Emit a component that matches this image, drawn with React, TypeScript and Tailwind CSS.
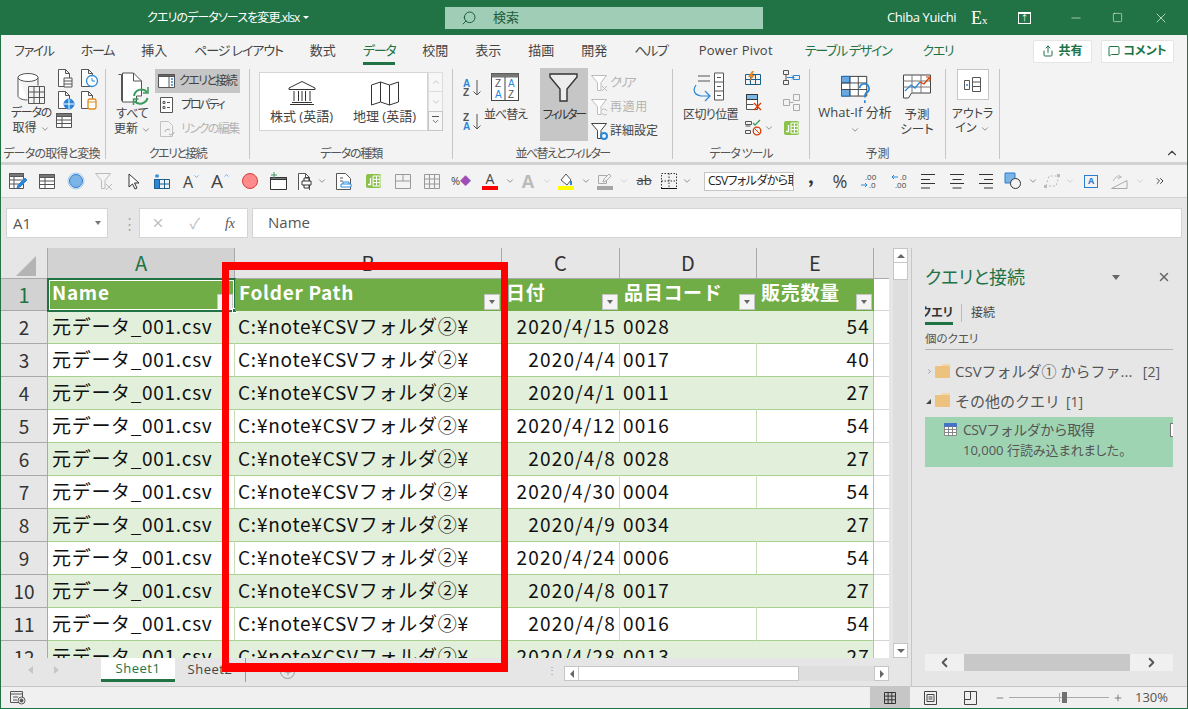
import type { ReactNode } from "react";
import { ChevronDown, Search, Share, MessageSquare, X, Minus, Square, ChevronUp, ChevronLeft, ChevronRight, ChevronsRight, Plus } from "lucide-react";

const ink = "#555";
const blue = "#2b88d8";

const Svg = ({ w = 20, h = 20, children }: { w?: number; h?: number; children: ReactNode }) => (
  <svg width={w} height={h} viewBox={`0 0 ${w} ${h}`} fill="none" stroke={ink} strokeWidth="1" className="shrink-0">
    {children}
  </svg>
);

const Chev = ({ c = "#555" }: { c?: string }) => <ChevronDown size={10} color={c} strokeWidth={1.5} className="inline-block shrink-0" />;

const Doc = ({ c = ink }: { c?: string }) => <path d="M2.5 1.5h7l4 4v13h-11zM9.5 1.5v4h4" stroke={c} fill="#fff" />;

/* ribbon icons */
const DatabaseIcon = () => (
  <Svg w={28} h={31}>
    <path d="M1 4.5V23c0 2 4 4 9.5 4M21 4.5V12.5" fill="#fff" />
    <ellipse cx="11" cy="4.5" rx="10" ry="4" fill="#fff" />
    <path d="M11.5 13.5h16v17h-16zM11.5 19h16M11.5 24.5h16M17 13.5v17M22.5 13.5v17" />
  </Svg>
);
const DocLines = () => <Svg><Doc /><path d="M8 10h8v9H8zM8 13h8M8 16h8" fill="#fff" /></Svg>;
const DocClock = () => <Svg><Doc /><circle cx="13" cy="13" r="5.5" stroke={blue} fill="#fff" strokeWidth="1.3" /><path d="M13 10v3h3" stroke={blue} /></Svg>;
const DocGlobe = () => <Svg><Doc /><circle cx="13" cy="14" r="5" fill={blue} stroke={blue} /><path d="M8 14h10M13 9v10" stroke="#fff" /></Svg>;
const DocDb = () => <Svg><Doc /><rect x="9" y="9" width="8" height="10" rx="2" stroke="#e38a1e" fill="#fff" strokeWidth="1.3" /><path d="M9 12h8" stroke="#e38a1e" /></Svg>;
const TableHead = ({ w = 16 }: { w?: number }) => (
  <Svg w={w} h={16}>
    <path d="M.5 1.5h15v14H.5z" fill="#fff" />
    <path d="M.5 1.5h15v3H.5z" fill="#777" />
    <path d="M.5 8h15M.5 11.5h15M6 5v10" />
  </Svg>
);
const RefreshAll = () => (
  <Svg w={32} h={36}>
    <path d="M1.5 2.5h3v26h6" />
    <path d="M5.5 1h11l8 8v15h-5v6h-14z" fill="#fff" />
    <path d="M16.5 1v8h8" />
    <path d="M17 24a7.5 7.5 0 0 1 13-4M30.5 26a7.5 7.5 0 0 1-13 3" stroke="#3a9b5c" strokeWidth="2" />
    <path d="M31 15v6h-5M16.5 33v-6h5" stroke="#3a9b5c" strokeWidth="1.5" />
  </Svg>
);
const QueriesIcon = () => (
  <Svg w={18} h={16}>
    <path d="M.5 1.5h16v13H.5z" fill="#fff" />
    <path d="M.5 1.5h16v2H.5z" fill="#666" />
    <path d="M11 3.5v11" />
    <path d="M13 6h2M13 9h2M13 12h2" stroke={blue} strokeWidth="1.5" />
  </Svg>
);
const PropsIcon = () => (
  <Svg w={14} h={18}>
    <path d="M.5 1.5h12v15H.5z" fill="#fff" />
    <path d="M3 5.5h2v2H3zM3 10.5h2v2H3zM7 6.5h3M7 11.5h3" />
  </Svg>
);
const LinksIcon = () => (
  <Svg w={16} h={18}>
    <path d="M.5 1.5h8l4 4v11H.5z" stroke="#c2c2c2" />
    <path d="M5 12a3 3 0 0 1 5-2M14 12a3 3 0 0 1-5 2" stroke="#aaa" />
  </Svg>
);
const BankIcon = () => (
  <Svg w={28} h={24}>
    <path d="M14 .5 1 7v1.5h26V7zM2 23.5h24M4 21.5h20" stroke="#333" />
    <path d="M6 10v10M10.5 10v10M14 10v10M17.5 10v10M22 10v10" stroke="#333" />
  </Svg>
);
const FoldMap = () => (
  <Svg w={28} h={25}>
    <path d="M.5 4 9.5 1l9 3 9-3v20l-9 3-9-3-9 3zM9.5 1v20M18.5 4v20" stroke="#333" />
  </Svg>
);
const AZ = ({ rev }: { rev?: boolean }) => (
  <svg width="19" height="20" viewBox="0 0 19 20" className="shrink-0">
    <text x="0" y="9" fontSize="10" fontWeight="700" fontFamily="Liberation Sans" fill={rev ? "#555" : blue}>{rev ? "Z" : "A"}</text>
    <text x="0" y="18" fontSize="10" fontWeight="700" fontFamily="Liberation Sans" fill={rev ? blue : "#555"}>{rev ? "A" : "Z"}</text>
    <path d="M14 2v15M10.5 13.5 14 17l3.5-3.5" stroke={ink} fill="none" />
  </svg>
);
const SortBig = () => (
  <svg width="29" height="29" viewBox="0 0 29 29" className="shrink-0">
    <rect x=".5" y=".5" width="27" height="27" fill="#fff" stroke="#444" />
    <rect x=".5" y=".5" width="27" height="4" fill="#777" />
    <path d="M14 4v24" stroke="#444" />
    <text x="4" y="14" fontSize="10" fontFamily="Liberation Sans" fill="#555">Z</text>
    <text x="4" y="25" fontSize="10" fontFamily="Liberation Sans" fill={blue}>A</text>
    <text x="17" y="14" fontSize="10" fontFamily="Liberation Sans" fill={blue}>A</text>
    <text x="17" y="25" fontSize="10" fontFamily="Liberation Sans" fill="#555">Z</text>
  </svg>
);
const Funnel = () => (
  <Svg w={30} h={29}>
    <path d="M1 1h27v3L18 16v12h-7V16L1 4z" fill="#ededed" stroke="#333" strokeWidth="1.4" />
  </Svg>
);
const FunnelSmall = ({ children, c = "#bbb" }: { children?: ReactNode; c?: string }) => (
  <Svg w={19} h={19}>
    <path d="M.5 1.5h15L10 8.5v8H6.5v-8z" fill="#fff" stroke={c} />
    {children}
  </Svg>
);
const TextCols = () => (
  <Svg w={36} h={30}>
    <path d="M5 4h12M5 9h12" />
    <path d="M21.5 1h9v27h-9zM21.5 10h9M21.5 19h9M24 5.5h4M24 14.5h4M24 23.5h4" fill="#fff" />
    <path d="M3 13c-4 6-1 10 5 11h8M12 19l5 5-5 5" stroke={blue} strokeWidth="1.2" />
  </Svg>
);
const FlashFill = () => (
  <Svg w={17} h={15}>
    <path d="M.5 3.5h15v10H.5zM.5 8.5h15M5.5 3.5v10M10.5 3.5v10" stroke="#1b5e8c" />
    <path d="M7 0 3 6h3l-2 5 6-7H7l2-4z" fill="#e8871e" stroke="none" />
  </Svg>
);
const RemoveDup = () => (
  <Svg w={17} h={17}>
    <path d="M1.5.5h11v15h-11z" fill="#fff" />
    <path d="M1.5.5h11v5h-11z" fill="#7cb8e8" stroke="#333" />
    <path d="M1.5 10.5h7" fill={blue} />
    <path d="m9 9 7 7M16 9l-7 7" stroke="#d83b01" strokeWidth="1.3" />
  </Svg>
);
const Validate = () => (
  <Svg w={18} h={17}>
    <path d="M.5 2.5h6v3h-6zM.5 7h5M.5 11.5h5v3h-5z" />
    <path d="m8 4 2 2 5-5" stroke="#3a9b5c" strokeWidth="1.3" />
    <circle cx="12" cy="12" r="3.8" stroke="#d83b01" strokeWidth="1.3" />
    <path d="m9.5 9.5 5 5" stroke="#d83b01" />
  </Svg>
);
const Consolidate = ({ c = ink }: { c?: string }) => (
  <Svg w={17} h={15}>
    <path d="M.5.5h5v4h-5zM.5 10.5h5v4h-5zM3 4.5v6" stroke={c} />
    <path d="M10.5 5.5h6v4h-6z" stroke={blue} />
    <path d="M4 7.5h7M9 5.5l2 2-2 2" stroke={blue} />
  </Svg>
);
const Relations = () => (
  <Svg w={17} h={17}>
    <path d="M.5 5.5h6v6h-6zM10.5.5h6v6h-6zM10.5 10.5h6v6h-6zM6.5 8.5h4" stroke="#aaa" />
  </Svg>
);
const DataModel = ({ w = 17 }: { w?: number }) => (
  <svg width={w} height="16" viewBox="0 0 17 16" className="shrink-0">
    <rect x="1" y="1" width="15" height="14" rx="2" fill="#8ac24a" />
    <path d="M8 3h7v10H8zM8 6.3h7M8 9.6h7M11.5 3v10" stroke="#fff" fill="none" />
    <path d="M5.5 5v6.5H3" stroke="#fff" strokeWidth="1.3" fill="none" />
  </svg>
);
const WhatIf = () => (
  <svg width="29" height="29" viewBox="0 0 31 31" className="shrink-0">
    <path d="M.5 1.5h27v21H.5z" fill="#fff" stroke="#333" />
    <path d="M.5 1.5h9v7h-9zM.5 15.5h9v7h-9z" fill="#68a8e0" stroke="#1b6ec2" />
    <path d="M9.5 1.5v21M18.5 1.5v21M.5 8.5h27M.5 15.5h27" stroke="#444" fill="none" />
    <path d="M20 14a5 5 0 1 1 7 5c-1.5 1-1.5 2-1.5 5M25.5 27v3" stroke={blue} strokeWidth="1.8" fill="none" />
  </svg>
);
const Forecast = () => (
  <Svg w={29} h={25}>
    <path d="M.5 1h27v18h-19l-3 5h-5z" fill="#fff" stroke="#444" />
    <path d="M.5 7h27M.5 13h27M9 1v18M18 1v18" stroke="#777" />
    <path d="m2 17 6-6 4 3 5-6" stroke={blue} strokeWidth="1.3" />
    <path d="m17 8 4 2 5-6M23 3h4v4" stroke="#d83b01" strokeWidth="1.2" />
  </Svg>
);
const OutlineIcon = () => (
  <Svg w={18} h={16}>
    <path d="M.5 3.5h5v9h-5z" />
    <path d="M2 8h2M3 7v2" stroke={blue} />
    <path d="M8.5.5h8v14h-8zM8.5 5h8M8.5 9.5h8" />
  </Svg>
);

/* quick access icons */
const Q1 = () => <Svg w={18} h={18}><path d="M.5 1.5h14v15H.5z" fill="#fff" /><path d="M.5 1.5h14v3H.5z" fill="#777" /><path d="M.5 8h14M.5 12h14M5 5v12" /><path d="m8 16 1-3 7-7 2 2-7 7z" fill={blue} stroke={blue} /></Svg>;
const Q2 = () => <TableHead />;
const Q3 = () => <Svg w={18} h={18}><circle cx="9" cy="9" r="6.5" fill="#7db4e6" stroke="#2b7cd3" /><circle cx="9" cy="9" r="8" stroke="#a5cdef" /></Svg>;
const Q4 = () => <Svg w={19} h={19}><path d="M.5 1.5h15L10 8.5v8H6.5v-8z" stroke="#bbb" fill="#f4f4f4" /><path d="m11 12 6 6M17 12l-6 6" stroke="#bbb" /></Svg>;
const Q5 = () => <Svg w={12} h={17}><path d="M1 1v13l3.5-3 2.5 5 2-1-2.5-5H11z" fill="#fff" stroke="#333" /></Svg>;
const Q6 = () => <Svg w={17} h={15}><path d="M.5 5.5h15v9H.5zM.5 10h15M5.5 5.5v9M10.5 5.5v9" stroke="#1b5e8c" /><path d="M.5 5.5h5v9h-5z" fill="#2b88d8" stroke="#1b5e8c" /><path d="M3 0v4M1 1l4 2M5 1 1 3" stroke={blue} /></Svg>;
const Q7 = ({ up }: { up?: boolean }) => (
  <span className="relative flex items-end leading-none text-[#444]">
    <span className={up ? "text-[19px]" : "text-[16px]"}>A</span>
    {up ? <ChevronUp size={7} color="#2b88d8" className="mb-[12px]" /> : <ChevronDown size={7} color="#2b88d8" className="mb-[10px]" />}
  </span>
);
const Q8 = () => <div className="h-[16px] w-[16px] rounded-full border border-[#d83b3b] bg-[#ff8a8a]" />;
const Q9 = () => <Svg w={18} h={18}><path d="M.5 5.5h16v12H.5z" fill="#fff" stroke="#333" /><path d="M.5 5.5h16v2H.5z" fill="#777" stroke="#333" /><path d="M4 0v6M1 3h6" stroke="#3a9b5c" /></Svg>;
const Q10 = () => <Svg w={17} h={18}><Doc /><path d="M6 9h9v4H6zM8 9V6h5v3M8 13v3h5v-3" fill="#fff" stroke="#333" /></Svg>;
const Q11 = () => <Svg w={16} h={18}><path d="M.5 1.5h9l5 5v11H.5z" fill="#fff" /><path d="M4 6h3M4 9h3" /><path d="M5 12h10v3H5zM7 12v-2h6v2" stroke={blue} fill="#fff" /></Svg>;
const GridGrey = ({ split }: { split?: boolean }) => (
  <Svg w={16} h={15}><path d={split ? "M.5.5h15v14H.5zM.5 7h15M8 .5V7" : "M.5.5h15v14H.5zM.5 5h15M.5 10h15M5.5.5v14M10.5.5v14"} stroke="#999" /></Svg>
);
const Swatch = ({ c, children }: { c: string; children: ReactNode }) => (
  <span className="flex flex-col items-center">
    {children}
    <span className={`block h-[4px] w-[16px] ${c}`} />
  </span>
);
const AlignIcon = ({ mode }: { mode: "l" | "c" | "r" }) => {
  const d = {
    l: "M0 1.5h14M0 6.5h9M0 10.5h14M0 15h9",
    c: "M0 1.5h14M2.5 6.5h9M0 10.5h14M2.5 15h9",
    r: "M0 1.5h14M5 6.5h9M0 10.5h14M5 15h9",
  }[mode];
  return <Svg w={14} h={16}><path d={d} stroke="#333" /></Svg>;
};

const Group = ({ className, label, track = "", children }: { className: string; label?: string; track?: string; children: ReactNode }) => (
  <>
    <div className={`flex h-full shrink-0 flex-col ${className}`}>
      <div className="flex h-[78px]">{children}</div>
      <div className={`flex h-[18px] items-center justify-center whitespace-nowrap pt-[1px] text-[12px] text-[#555] ${track}`}>{label}</div>
    </div>
    <div className="my-[3px] w-px shrink-0 bg-[#c6c6c6]" />
  </>
);

const SmallBtn = ({ icon, text, gray, className = "" }: { icon: ReactNode; text: string; gray?: boolean; className?: string }) => (
  <div className={`flex h-[24px] items-center whitespace-nowrap text-[12px] ${gray ? "text-[#b4b4b4]" : "text-[#444]"} ${className}`}>
    {icon}
    {text}
  </div>
);

const Ribbon = () => (
  <div className="flex h-[96px] pl-[3px]">
    <Group className="w-[101px]" label="データの取得と変換" track="pr-[6px] tracking-[-0.8px]">
      <div className="flex w-[52px] flex-col items-center pl-[2px] pt-[7px] text-[12px] leading-[15px] text-[#444]">
        <DatabaseIcon />
        <div className="mt-[1px] whitespace-nowrap tracking-[-1.2px]">データの</div>
        <div className="whitespace-nowrap">取得 <Chev /></div>
      </div>
      <div className="flex w-[46px] flex-wrap content-start gap-x-[3px] gap-y-[2px] pt-[2px]">
        <DocLines /><DocClock /><DocGlobe /><DocDb /><TableHead />
      </div>
    </Group>
    <Group className="w-[143px]" label="クエリと接続" track="tracking-[-1.6px]">
      <div className="flex w-[49px] flex-col items-center pl-[4px] pt-[6px] text-[12px] leading-[15px] text-[#444]">
        <RefreshAll />
        <div className="-mt-[2px] whitespace-nowrap">すべて</div>
        <div className="whitespace-nowrap">更新 <Chev /></div>
      </div>
      <div className="w-[85px] pt-[3px]">
        <SmallBtn className="gap-[3px] bg-[#c6c6c6] pl-[3px] tracking-[-1.6px]" icon={<QueriesIcon />} text="クエリと接続" />
        <SmallBtn className="gap-[7px] pl-[5px] tracking-[-2.2px]" icon={<PropsIcon />} text="プロパティ" />
        <SmallBtn className="gap-[5px] pl-[5px] tracking-[-1.5px]" gray icon={<LinksIcon />} text="リンクの編集" />
      </div>
    </Group>
    <Group className="w-[202px]" label="データの種類" track="tracking-[-1.2px]">
      <div className="flex pl-[9px] pt-[6px]">
        <div className="flex h-[59px] w-[169px] border border-[#d4d4d4] bg-white text-[13px] text-[#444]">
          <div className="flex w-[83px] flex-col items-center pt-[8px]">
            <BankIcon />
            <div className="mt-[2px] whitespace-nowrap">株式 (英語)</div>
          </div>
          <div className="flex w-[83px] flex-col items-center pt-[8px]">
            <FoldMap />
            <div className="mt-[1px] whitespace-nowrap">地理 (英語)</div>
          </div>
        </div>
        <div className="flex h-[59px] w-[15px] flex-col">
          <div className="flex h-[20px] items-center justify-center border border-[#dcdcdc] bg-[#f7f7f7]"><ChevronUp size={10} color="#bbb" /></div>
          <div className="flex h-[19px] items-center justify-center border-x border-[#dcdcdc] bg-[#f7f7f7]"><ChevronDown size={10} color="#bbb" /></div>
          <div className="flex h-[20px] flex-col items-center justify-center border border-[#c6c6c6] bg-[#f7f7f7]">
            <div className="h-px w-[7px] bg-[#555]" />
            <ChevronDown size={9} color="#444" />
          </div>
        </div>
      </div>
    </Group>
    <Group className="w-[219px]" label="並べ替えとフィルター" track="tracking-[-1.6px]">
      <div className="flex w-[29px] flex-col gap-[14px] pl-[10px] pt-[12px]"><AZ /><AZ rev /></div>
      <div className="flex w-[47px] flex-col items-center pt-[7px] text-[12px] text-[#444]">
        <SortBig />
        <div className="mt-[4px] whitespace-nowrap tracking-[-1px]">並べ替え</div>
      </div>
      <div className="w-[11px]" />
      <div className="mt-[2px] flex h-[73px] w-[48px] flex-col items-center bg-[#c6c6c6] pt-[5px] text-[12px] text-[#333]">
        <Funnel />
        <div className="mt-[4px] whitespace-nowrap tracking-[-2px]">フィルター</div>
      </div>
      <div className="w-[72px] pl-[3px] pt-[5px]">
        <SmallBtn className="tracking-[-2.6px]" gray icon={<FunnelSmall><path d="m11 12 5 5M16 12l-5 5" stroke="#bbb" /></FunnelSmall>} text="クリア" />
        <SmallBtn className="tracking-[0.6px]" gray icon={<FunnelSmall><path d="M11 12a3 3 0 0 1 5 1M16 16a3 3 0 0 1-5-1" stroke="#bbb" /></FunnelSmall>} text="再適用" />
        <SmallBtn icon={<FunnelSmall c="#444"><circle cx="13" cy="14" r="3" stroke={blue} strokeWidth="2" /></FunnelSmall>} text="詳細設定" />
      </div>
    </Group>
    <Group className="w-[136px]" label="データ ツール" track="tracking-[-1.1px]">
      <div className="flex w-[72px] flex-col items-center pl-[3px] pt-[6px] text-[12px] text-[#444]">
        <TextCols />
        <div className="mt-[4px] whitespace-nowrap tracking-[-0.6px]">区切り位置</div>
      </div>
      <div className="flex w-[34px] flex-col gap-[8px] pt-[5px]">
        <FlashFill />
        <RemoveDup />
        <div className="flex items-center gap-[1px]"><Validate /><Chev /></div>
      </div>
      <div className="flex flex-col gap-[9px] pl-[4px] pt-[4px]"><Consolidate /><Relations /><DataModel /></div>
    </Group>
    <Group className="w-[135px]" label="予測">
      <div className="flex w-[90px] flex-col items-center pt-[9px] text-[13px] leading-[15px] text-[#444]">
        <WhatIf />
        <div className="mt-[1px] whitespace-nowrap">What-If 分析</div>
        <div className="mt-[1px]"><Chev /></div>
      </div>
      <div className="flex w-[34px] flex-col items-center pt-[8px] text-[12.5px] leading-[15px] text-[#444]">
        <Forecast />
        <div className="mt-[8px]">予測</div>
        <div className="whitespace-nowrap">シート</div>
      </div>
    </Group>
    <Group className="w-[53px]">
      <div className="flex w-full flex-col items-center pt-[3px] text-[12px] leading-[14px] text-[#444]">
        <div className="flex h-[31px] w-[32px] items-center justify-center border border-[#c6c6c6] bg-white"><OutlineIcon /></div>
        <div className="mt-[7px] whitespace-nowrap">アウトラ</div>
        <div className="whitespace-nowrap">イン <Chev /></div>
      </div>
    </Group>
    <div className="flex flex-1 items-end justify-end pb-[2px] pr-[8px]"><ChevronUp size={14} color="#444" /></div>
  </div>
);

const QSlot = ({ children, w = "w-[29px]" }: { children?: ReactNode; w?: string }) => (
  <div className={`flex h-full shrink-0 items-center justify-center ${w}`}>{children}</div>
);

const Quick = () => (
  <div className="flex h-[32px] items-center pl-[2px] text-[#444]">
    <QSlot><Q1 /></QSlot><QSlot><Q2 /></QSlot><QSlot><Q3 /></QSlot><QSlot><Q4 /></QSlot><QSlot><Q5 /></QSlot>
    <QSlot><Q6 /></QSlot><QSlot><Q7 /></QSlot><QSlot><Q7 up /></QSlot><QSlot><Q8 /></QSlot><QSlot><Q9 /></QSlot>
    <QSlot w="w-[22px]"><Q10 /></QSlot><QSlot w="w-[14px]"><Chev /></QSlot><QSlot w="w-[30px]"><Q11 /></QSlot>
    <QSlot><DataModel /></QSlot><QSlot><GridGrey split /></QSlot><QSlot><GridGrey /></QSlot>
    <QSlot w="w-[30px]"><span className="text-[11px]">%<span className="text-[#a14db8]">◆</span></span></QSlot>
    <QSlot w="w-[28px]">
      <Swatch c="bg-[#ff0000]"><span className="text-[14px] leading-[14px]">A</span></Swatch>
    </QSlot>
    <QSlot w="w-[12px]"><Chev /></QSlot>
    <QSlot w="w-[24px]"><span className="text-[18px] font-bold text-[#bbb]">A</span></QSlot>
    <QSlot w="w-[14px]"><Chev c="#bbb" /></QSlot>
    <QSlot w="w-[24px]">
      <Swatch c="bg-[#ffff00]"><Svg w={15} h={13}><path d="m2 7 5-6 5 6-4 5z" fill="#fff" /><path d="M12 8v4" stroke={blue} strokeWidth="2" /></Svg></Swatch>
    </QSlot>
    <QSlot w="w-[15px]"><Chev /></QSlot>
    <QSlot w="w-[24px]">
      <Swatch c="bg-[#a6a6a6]"><Svg w={15} h={13}><path d="M.5 2.5h8v8h-8z" stroke="#aaa" /><path d="m5 9 1-3 5-5 2 2-5 5z" stroke="#aaa" fill="#f4f4f4" /></Svg></Swatch>
    </QSlot>
    <QSlot w="w-[14px]"><Chev c="#bbb" /></QSlot>
    <QSlot w="w-[26px]"><span className="text-[13px] line-through decoration-[#444]">ab</span></QSlot>
    <QSlot w="w-[24px]"><Svg w={16} h={16}><path d="M.5.5h15v15H.5z" stroke="#333" strokeDasharray="1.5 1.5" /><path d="M.5 8h15M8 .5v15" stroke="#333" strokeDasharray="1.5 1.5" /><path d="M0 15.5h16" stroke="#111" /></Svg></QSlot>
    <QSlot w="w-[12px]"><Chev /></QSlot>
    <div className="ml-[11px] flex h-[19px] w-[90px] shrink-0 items-center overflow-hidden whitespace-nowrap border border-[#c6c6c6] bg-white pl-[3px] text-[12px] tracking-[-0.6px] text-[#222]">CSVフォルダから取得</div>
    <QSlot w="w-[34px]"><span className="mb-[10px] font-serif text-[24px] font-bold leading-[18px] text-[#333]">,</span></QSlot>
    <QSlot w="w-[24px]"><span className="text-[18px] text-[#444]">%</span></QSlot>
    <QSlot w="w-[33px]"><Svg w={16} h={16}><text x="4" y="7" fontSize="8" fill="#444" stroke="none">.00</text><text x="8" y="15" fontSize="8" fill="#444" stroke="none">.0</text><path d="M0 12h6M4 10l2 2-2 2" stroke={blue} /></Svg></QSlot>
    <QSlot w="w-[28px]"><Svg w={16} h={16}><text x="9" y="7" fontSize="8" fill="#444" stroke="none">.0</text><text x="4" y="15" fontSize="8" fill="#444" stroke="none">.00</text><path d="M7 4H1M3 2 1 4l2 2" stroke={blue} /></Svg></QSlot>
    <QSlot><AlignIcon mode="l" /></QSlot><QSlot><AlignIcon mode="c" /></QSlot><QSlot><AlignIcon mode="r" /></QSlot>
    <QSlot w="w-[26px]"><Svg w={18} h={18}><path d="M1 1h10v10H1z" fill="#7db4e6" stroke="#2b7cd3" /><circle cx="11.5" cy="11.5" r="5" fill="#f4f4f4" stroke="#333" /></Svg></QSlot>
    <QSlot w="w-[14px]"><Chev /></QSlot>
    <QSlot w="w-[24px]"><Svg w={17} h={16}><path d="M2 13 5 3h10l-3 10z" stroke="#bbb" strokeDasharray="2 2" /><path d="M0 12h3v3H0zM13 1h3v3h-3z" fill="#bbb" stroke="none" /></Svg></QSlot>
    <QSlot w="w-[12px]"><Chev c="#bbb" /></QSlot>
    <QSlot w="w-[30px]"><div className="flex h-[13px] w-[14px] items-center justify-center border border-[#2b7cd3] bg-[#f3f3f3] text-[9px] font-bold text-[#2b7cd3]">A</div></QSlot>
    <QSlot w="w-[28px]"><Svg w={18} h={15}><path d="M.5 14.5 16 6.500v8z" stroke="#aaa" /><path d="m2 7 3-4 6 0M7 1l3 2-3 2" stroke="#bbb" /></Svg></QSlot>
    <QSlot w="w-[12px]"><Chev c="#bbb" /></QSlot>
    <QSlot w="w-[28px]"><ChevronsRight size={12} color="#444" /></QSlot>
  </div>
);

const FilterBtn = ({ className = "" }: { className?: string }) => (
  <div className={`absolute bottom-[1px] right-[2px] flex h-[16px] w-[16px] items-center justify-center border border-[#c4c4c4] bg-[#f4f4f4] ${className}`}>
    <div className="h-0 w-0 border-x-[3.5px] border-t-[4px] border-x-transparent border-t-[#666]" />
  </div>
);

const rows: [number, string, string, number][] = [
  [2, "2020/4/15", "0028", 54],
  [3, "2020/4/4", "0017", 40],
  [4, "2020/4/1", "0011", 27],
  [5, "2020/4/12", "0016", 54],
  [6, "2020/4/8", "0028", 27],
  [7, "2020/4/30", "0004", 54],
  [8, "2020/4/9", "0034", 27],
  [9, "2020/4/24", "0006", 54],
  [10, "2020/4/8", "0017", 27],
  [11, "2020/4/8", "0016", 54],
  [12, "2020/4/28", "0013", 27],
];

const ColHead = ({ className, label, on }: { className: string; label: string; on?: boolean }) => (
  <div className={`flex h-full shrink-0 items-center justify-center border-b border-r border-[#a9a9a9] text-[20px] ${on ? "bg-[#d2d2d2] text-[#217346]" : "bg-[#e6e6e6] text-[#333]"} ${className}`}>{label}</div>
);

const HeadCell = ({ className, label }: { className: string; label: string }) => (
  <div className={`relative flex h-full shrink-0 items-start whitespace-nowrap pl-[4px] text-[19px] font-bold leading-[26px] tracking-[0.7px] text-white ${className}`}>
    <span>{label}</span>
    <FilterBtn />
  </div>
);

const Sheet = () => (
  <div className="h-[410px] w-[888px] shrink-0 overflow-hidden font-['Noto_Sans_CJK_JP',sans-serif] text-[#111] [font-feature-settings:normal]">
    <div className="flex h-[31px]">
      <div className="flex h-full w-[47px] shrink-0 items-center justify-center border-b border-r border-[#a9a9a9] bg-[#e6e6e6]">
        <div className="ml-[4px] mt-[6px] h-0 w-0 border-b-[20px] border-l-[20px] border-b-[#b4b4b4] border-l-transparent" />
      </div>
      <ColHead className="w-[187px]" label="A" on />
      <ColHead className="w-[267px]" label="B" />
      <ColHead className="w-[118px]" label="C" />
      <ColHead className="w-[137px]" label="D" />
      <ColHead className="w-[117px]" label="E" />
      <div className="h-full flex-1 border-b border-[#a9a9a9] bg-[#e6e6e6]" />
    </div>
    <div className="flex h-[32px]">
      <div className="flex w-[47px] shrink-0 items-center justify-center border-b border-r border-[#a9a9a9] bg-[#d2d2d2] text-[20px] text-[#217346]">1</div>
      <div className="relative flex">
        <HeadCell className="w-[187px] bg-[#70ad47]" label="Name" />
        <div className="pointer-events-none absolute left-[-1px] top-[-1px] h-[34px] w-[189px] border-2 border-[#217346] outline outline-1 -outline-offset-3 outline-white" />
        <div className="absolute left-[184px] top-[29px] h-[5px] w-[5px] border border-white bg-[#217346]" />
      </div>
      <HeadCell className="w-[267px] bg-[#70ad47]" label="Folder Path" />
      <HeadCell className="w-[118px] bg-[#70ad47]" label="日付" />
      <HeadCell className="w-[137px] bg-[#70ad47]" label="品目コード" />
      <HeadCell className="w-[117px] bg-[#70ad47]" label="販売数量" />
      <div className="flex-1 border-b border-[#d4d4d4] bg-white" />
    </div>
    {rows.map(([n, date, code, qty]) => {
      const bg = n % 2 === 0 ? "bg-[#e2efda]" : "bg-white";
      const line = n % 2 === 0 ? "border-r-[#e2efda]" : "border-r-[#c9dfba]";
      return (
        <div key={n} className="flex h-[33px] text-[19px] leading-[30px]">
          <div className="flex w-[47px] shrink-0 items-center justify-center border-b border-r border-[#a9a9a9] bg-[#e6e6e6] text-[19px] text-[#333]">{n}</div>
          <div className={`w-[187px] shrink-0 overflow-hidden whitespace-nowrap border-b border-r border-b-[#a9d08e] pl-[4px] tracking-[0.7px] ${line} ${bg}`}>元データ_001.csv</div>
          <div className={`w-[267px] shrink-0 overflow-hidden whitespace-nowrap border-b border-r border-b-[#a9d08e] pl-[3px] tracking-[0.75px] ${line} ${bg}`}>C:¥note¥CSVフォルダ②¥</div>
          <div className={`w-[118px] shrink-0 overflow-hidden whitespace-nowrap border-b border-r border-b-[#a9d08e] pr-[3px] text-right tracking-[1.2px] ${line} ${bg}`}>{date}</div>
          <div className={`w-[137px] shrink-0 overflow-hidden whitespace-nowrap border-b border-r border-b-[#a9d08e] pl-[3px] tracking-[1.2px] ${line} ${bg}`}>{code}</div>
          <div className={`w-[117px] shrink-0 overflow-hidden whitespace-nowrap border-b border-r border-b-[#a9d08e] border-r-[#a9d08e] pr-[3px] text-right tracking-[1.2px] ${bg}`}>{qty}</div>
          <div className="flex-1 border-b border-[#d4d4d4] bg-white" />
        </div>
      );
    })}
  </div>
);

const ScrollV = () => (
  <div className="ml-[4px] flex h-[410px] w-[15px] shrink-0 flex-col justify-between bg-[#dedede]">
    <div>
      <div className="flex h-[15px] items-center justify-center border border-[#c6c6c6] bg-white">
        <div className="h-0 w-0 border-x-[4px] border-b-[4px] border-x-transparent border-b-[#666]" />
      </div>
      <div className="h-[17px] border-x border-b border-[#c6c6c6] bg-white" />
    </div>
    <div className="flex h-[15px] items-center justify-center border border-[#c6c6c6] bg-white">
      <div className="h-0 w-0 border-x-[4px] border-t-[4px] border-x-transparent border-t-[#666]" />
    </div>
  </div>
);

const TabsRow = () => (
  <div className="flex h-[28px] items-start text-[13px] tracking-[0.5px]">
    <div className="flex h-[24px] w-[100px] shrink-0 items-center gap-[21px] pl-[27px]">
      <div className="h-0 w-0 border-y-[4px] border-r-[5px] border-y-transparent border-r-[#c6c6c6]" />
      <div className="h-0 w-0 border-y-[4px] border-l-[5px] border-y-transparent border-l-[#c6c6c6]" />
    </div>
    <div className="flex h-[24px] w-[74px] shrink-0 items-center justify-center border-b-[3px] border-[#217346] bg-white text-[#217346]">Sheet1</div>
    <div className="flex h-[24px] w-[71px] shrink-0 items-center justify-center border-r border-[#999] text-[#444]">Sheet2</div>
    <div className="ml-[34px] mt-[6px] flex h-[15px] w-[15px] shrink-0 items-center justify-center rounded-full border border-[#999]"><Plus size={10} color="#888" /></div>
    <div className="ml-[252px] mt-[7px] w-[8px] text-[10px] leading-[10px] text-[#999]">⋮</div>
    <div className="ml-[9px] mt-[8px] flex h-[15px] w-[325px] shrink-0 items-center bg-[#dedede]">
      <div className="flex h-full w-[15px] items-center justify-center border border-[#c6c6c6] bg-white">
        <div className="h-0 w-0 border-y-[4px] border-r-[4px] border-y-transparent border-r-[#666]" />
      </div>
      <div className="h-full w-[220px] border-y border-r border-[#c6c6c6] bg-white" />
      <div className="h-full flex-1" />
      <div className="flex h-full w-[15px] items-center justify-center border border-[#c6c6c6] bg-white">
        <div className="h-0 w-0 border-y-[4px] border-l-[4px] border-y-transparent border-l-[#666]" />
      </div>
    </div>
  </div>
);

const Folder = () => (
  <div className="relative h-[12px] w-[15px] shrink-0 rounded-[1px] bg-[#ecc27e] before:absolute before:right-0 before:top-[-2px] before:h-[2px] before:w-[8px] before:bg-[#f3d7a8]" />
);

const Panel = () => (
  <div className="flex h-[438px] w-[276px] shrink-0 flex-col border-l border-[#c6c6c6] pl-[13px] pr-[14px]">
    <div className="flex h-[55px] items-center pt-[3px]">
      <div className="flex-1 text-[18px] text-[#217346]">クエリと接続</div>
      <div className="mr-[37px] h-0 w-0 border-x-[4.5px] border-t-[5px] border-x-transparent border-t-[#666]" />
      <X size={14} color="#666" strokeWidth={2.5} className="mr-[2px]" />
    </div>
    <div className="flex h-[19px] items-center text-[12px] text-[#444]">
      <div className="w-[28px] overflow-hidden whitespace-nowrap font-semibold text-[#333] [direction:rtl]">クエリ</div>
      <div className="mx-[8px] h-[18px] w-px bg-[#bbb]" />
      <div className="ml-[1px]">接続</div>
    </div>
    <div className="h-[3px] w-[28px] bg-[#217346]" />
    <div className="flex h-[25px] items-center border-b border-[#b4b4b4] pt-[4px] text-[11.5px] text-[#555]">個のクエリ</div>
    <div className="flex h-[42px] items-center whitespace-nowrap pl-[1px] pt-[1px] text-[15px] text-[#555] [font-feature-settings:normal]">
      <ChevronRight size={7} color="#666" />
      <div className="ml-[2px]"><Folder /></div>
      <div className="ml-[5px]">CSVフォルダ① からファ...</div>
      <div className="ml-auto pr-[13px] text-[14px]">[2]</div>
    </div>
    <div className="flex h-[18px] items-center whitespace-nowrap pl-[1px] text-[15px] text-[#555] [font-feature-settings:normal]">
      <div className="h-0 w-0 border-b-[5px] border-l-[5px] border-b-[#444] border-l-transparent" />
      <div className="ml-[4px]"><Folder /></div>
      <div className="ml-[5px]">その他のクエリ</div>
      <div className="ml-[6px] text-[14px]">[1]</div>
    </div>
    <div className="relative mt-[7px] h-[50px] bg-[#9fd4b3] pl-[19px] pt-[2px] text-[#555]">
      <div className="flex h-[20px] items-center gap-[5px] whitespace-nowrap text-[14px] tracking-[-0.5px] [font-feature-settings:normal]">
        <Svg w={14} h={13}><path d="M.5.5h12v12H.5z" fill="#fff" stroke="#888" /><path d="M.5.5h12v3H.5z" fill="#4472c4" stroke="#4472c4" /><path d="M.5 6.5h12M.5 9.5h12M4.5 3.5v9M8.5 3.5v9" stroke="#888" /></Svg>
        CSVフォルダから取得
      </div>
      <div className="mt-[2px] whitespace-nowrap pl-[19px] text-[13px]">10,000 行読み込まれました。</div>
      <div className="absolute right-0 top-[6px] h-[14px] w-[3px] border border-r-0 border-[#777] bg-white" />
    </div>
    <div className="flex-1" />
    <div className="mb-[15px] flex h-[17px] items-center bg-[#f0f0f0]">
      <div className="flex w-[39px] justify-center"><ChevronLeft size={15} color="#555" strokeWidth={3} /></div>
      <div className="h-full w-[166px] bg-[#c8c8c8]" />
      <div className="flex flex-1 justify-center"><ChevronRight size={15} color="#555" strokeWidth={3} /></div>
    </div>
  </div>
);

const Status = () => (
  <div className="flex h-[22px] items-center border-t border-[#c6c6c6] bg-[#f0f0f0] pl-[9px] pr-[19px]">
    <Svg w={16} h={15}><path d="M.5 1.5h12v11H.5zM.5 4h12M3 7h5M3 10h4" /><circle cx="11.5" cy="10.5" r="3.5" fill="#f0f0f0" /><circle cx="11.5" cy="10.5" r="1.5" fill="#555" /></Svg>
    <div className="flex-1" />
    <div className="flex h-full w-[40px] items-center justify-center bg-[#c6c6c6]">
      <Svg w={14} h={14}><path d="M1.5 1.5h11v11h-11zM1.5 5.1h11M1.5 8.8h11M5.1 1.5v11M8.8 1.5v11" stroke="#333" /></Svg>
    </div>
    <div className="flex w-[40px] justify-center"><Svg w={15} h={14}><path d="M1.5.5h12v13h-12z" stroke="#444" /><path d="M4 3.5h7v7H4zM5.5 6h4M5.5 8h4" stroke="#444" /></Svg></div>
    <div className="flex w-[40px] justify-center"><Svg w={15} h={14}><path d="M1.5.5h12v13h-12zM1.5 8.5h6M7.5.5v8" stroke="#444" /></Svg></div>
    <div className="ml-[5px] flex items-center">
      <Minus size={10} color="#444" strokeWidth={1.5} />
      <div className="relative ml-[4px] h-px w-[100px] bg-[#aaa]">
        <div className="absolute left-[50px] top-[-4px] h-[9px] w-px bg-[#aaa]" />
        <div className="absolute left-[53px] top-[-5px] h-[11px] w-[5px] bg-[#707070]" />
      </div>
      <Plus size={10} color="#444" strokeWidth={1.5} className="ml-[4px]" />
    </div>
    <div className="w-[45px] text-right text-[13px] text-[#555]">130%</div>
  </div>
);

const kana = "tracking-[-1.3px]";
const tabs: [string, string][] = [
  ["ファイル", kana],
  ["ホーム", kana],
  ["挿入", ""],
  ["ページ レイアウト", "tracking-[-1.1px]"],
  ["数式", ""],
  ["データ", kana],
  ["校閲", ""],
  ["表示", ""],
  ["描画", ""],
  ["開発", ""],
  ["ヘルプ", kana],
  ["Power Pivot", "ml-[4px] tracking-[0.2px]"],
];

export default function App() {
  return (
    <div className="relative h-[709px] w-[1188px] overflow-hidden border-x border-b border-[#217346] bg-[#e6e6e6] font-['Open_Sans','Noto_Sans_CJK_JP',sans-serif] [font-feature-settings:'palt']">
      {/* title bar */}
      <div className="flex h-[35px] items-center bg-[#217346] text-[13px] text-white">
        <div className="w-[146px] shrink-0" />
        <div className="w-[150px] shrink-0 whitespace-nowrap text-[12px] tracking-[-0.9px]">クエリのデータソースを変更.xlsx</div>
        <div className="ml-[6px] h-0 w-0 border-x-[3px] border-t-[3px] border-x-transparent border-t-white" />
        <div className="ml-[136px] flex h-[22px] w-[318px] shrink-0 items-center bg-[#a0cdb5] pl-[16px] text-[#1c5c3a]">
          <Search size={16} strokeWidth={1.5} className="-scale-x-100" />
          <span className="ml-[16px]">検索</span>
        </div>
        <div className="ml-[124px] w-[69px] shrink-0 whitespace-nowrap tracking-[-0.4px]">Chiba Yuichi</div>
        <div className="ml-[15px] w-[20px] shrink-0 font-['Liberation_Serif',serif] text-[18px] leading-none">E<span className="text-[11px]">x</span></div>
        <div className="ml-[27px] flex h-[12px] w-[13px] shrink-0 items-center justify-center border border-t-2 border-white text-[8px] leading-none">↑</div>
        <Minus size={14} strokeWidth={1} className="ml-[38px]" />
        <Square size={11} strokeWidth={1.2} className="ml-[29px]" />
        <X size={16} strokeWidth={1} className="ml-[30px]" />
      </div>
      {/* ribbon */}
      <div className="h-[127px] bg-[#f3f3f3]">
        <div className="flex h-[31px] items-center pl-[13px] pt-[1px] text-[13px] text-[#444]">
          <div className="flex gap-[27px]">
            {tabs.map(([t, track]) => (
              <div key={t} className={`relative whitespace-nowrap ${track} ${t === "データ" ? "text-[#217346]" : ""}`}>
                {t}
                {t === "データ" && <div className="absolute bottom-[-4px] left-0 h-[3px] w-full bg-[#217346]" />}
              </div>
            ))}
            <div className={`ml-[5px] whitespace-nowrap text-[#217346] ${kana}`}>テーブル デザイン</div>
            <div className={`ml-[4px] whitespace-nowrap text-[#217346] ${kana}`}>クエリ</div>
          </div>
          <div className="flex-1" />
          <div className="flex h-[23px] w-[59px] items-center justify-center gap-[4px] rounded-[2px] border border-[#e4e4e4] bg-white text-[12px] font-bold text-[#217346]">
            <Share size={12} />共有
          </div>
          <div className="ml-[9px] mr-[13px] flex h-[23px] w-[73px] items-center justify-center gap-[3px] rounded-[2px] border border-[#e4e4e4] bg-white text-[12px] font-bold text-[#217346]">
            <MessageSquare size={12} />コメント
          </div>
        </div>
        <Ribbon />
      </div>
      <div className="h-[3px] bg-[#d2d2d2]" />
      <div className="bg-[#f3f3f3]"><Quick /></div>
      <div className="h-[1px] bg-[#d2d2d2]" />
      {/* formula bar */}
      <div className="flex h-[50px] items-center pl-[5px] text-[15px] text-[#555]">
        <div className="flex h-[30px] w-[102px] items-center justify-between border border-[#d4d4d4] bg-white px-[6px]">
          A1
          <div className="h-0 w-0 border-x-[3.5px] border-t-[4px] border-x-transparent border-t-[#777]" />
        </div>
        <div className="ml-[14px] w-[17px] text-[#aaa]">⋮</div>
        <div className="flex h-[30px] w-[109px] items-center justify-between border border-[#d4d4d4] bg-white pl-[11px] pr-[12px]">
          <X size={14} color="#bbb" strokeWidth={2} />
          <span className="text-[#bbb]">✓</span>
          <span className="font-['Liberation_Serif',serif] text-[14px] italic text-[#555]">fx</span>
        </div>
        <div className="ml-[4px] h-[30px] w-[930px] border border-[#d4d4d4] bg-white pl-[15px] leading-[26px]">Name</div>
      </div>
      {/* sheet and side panel */}
      <div className="flex">
        <div className="w-[910px] shrink-0">
          <div className="flex">
            <Sheet />
            <ScrollV />
          </div>
          <TabsRow />
        </div>
        <Panel />
      </div>
      <Status />
      {/* red highlight */}
      <div className="pointer-events-none absolute left-[221px] top-[262px] h-[410px] w-[286px] border-x-[7px] border-b-[9px] border-t-[8px] border-[#ff0000]" />
    </div>
  );
}
